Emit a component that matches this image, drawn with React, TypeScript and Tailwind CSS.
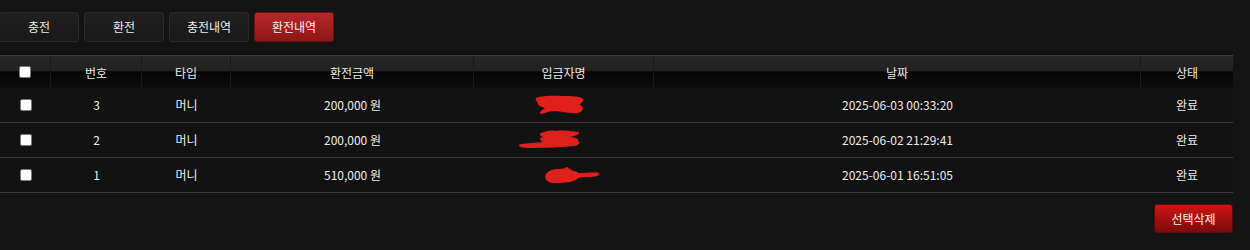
import React from "react";

const cols = [
  "w-[51px]",
  "w-[91px]",
  "w-[89px]",
  "w-[243px]",
  "w-[180px]",
  "w-[487px]",
  "w-[92px]",
];

const rows = [
  { no: 3, amount: "200,000 원", date: "2025-06-03 00:33:20", mark: 0 },
  { no: 2, amount: "200,000 원", date: "2025-06-02 21:29:41", mark: 1 },
  { no: 1, amount: "510,000 원", date: "2025-06-01 16:51:05", mark: 2 },
];

// red marker scribbles covering names
function Scribble({ kind }: { kind: number }) {
  if (kind === 0)
    return (
      <svg width="80" height="22" viewBox="0 0 80 22" className="mr-[20px]">
        <path
          d="M22 4 C30 1 42 2 50 2 C58 2 66 2 69 5 C71 7 66 9 66 11 C70 13 70 17 64 19 C56 20 46 17 40 17 C34 17 30 20 27 20 C24 19 28 16 31 14 C27 13 23 11 24 9 C22 7 21 5 22 4 Z"
          fill="#e0201c"
        />
      </svg>
    );
  if (kind === 1)
    return (
      <svg width="80" height="22" viewBox="0 0 80 22" className="mr-[18px]">
        <path
          d="M26 4 C32 2 36 1 40 2 C44 1 56 2 64 3 C65 6 58 7 56 8 C62 9 64 10 63 12 C66 13 64 16 60 17 C50 18 30 19 12 19 C4 19 2 16 6 15 C12 14 22 14 28 13 C24 11 24 9 28 8 C25 7 24 5 26 4 Z"
          fill="#e0201c"
        />
      </svg>
    );
  return (
    <svg width="80" height="20" viewBox="0 0 80 20" className="ml-[30px]">
      <path
        d="M7 9 C9 5 16 4 20 4 C24 4 26 3 28 2 C30 3 30 4 32 5 C36 6 38 7 40 8 C48 8 56 7 60 8 C61 11 56 12 48 12 C44 12 40 12 38 14 C34 18 22 18 14 18 C7 17 5 13 7 9 Z"
        fill="#e0201c"
      />
    </svg>
  );
}

function Check() {
  return (
    <span className="block w-[12px] h-[12px] bg-white border border-[#7a7a7a] rounded-[2px] mx-auto" />
  );
}

export default function App() {
  const tabs = ["충전", "환전", "충전내역", "환전내역"];
  return (
    <div
      className="w-[1250px] h-[250px] bg-[#141414] text-[#ececec] text-[12px] overflow-hidden"
      style={{ fontFamily: '"Noto Sans CJK KR", "Noto Sans", sans-serif' }}
    >
      {/* Tabs */}
      <div className="flex gap-[5px] pt-[12px] -ml-[1px]">
        {tabs.map((t, i) => (
          <div
            key={t}
            className={
              i === 3
                ? "w-[80px] h-[30px] flex items-center justify-center rounded-[3px] border border-[#6a1414] bg-gradient-to-b from-[#b8272b] to-[#8c1717] text-[#f2f2f2]"
                : "w-[80px] h-[30px] flex items-center justify-center rounded-[3px] border border-[#2a2a2a] bg-gradient-to-b from-[#202020] to-[#191919] text-[#ececec]"
            }
          >
            {t}
          </div>
        ))}
      </div>

      {/* Table */}
      <div className="w-[1233px] mt-[13px]">
        <div className="flex h-[33px] border-t border-[#3a3a3a] bg-[linear-gradient(to_bottom,#272727_0%,#222222_45%,#050505_50%,#0d0d0d_100%)]">
          {["", "번호", "타입", "환전금액", "입금자명", "날짜", "상태"].map((h, i) => (
            <div
              key={i}
              className={`${cols[i]} ${i < 6 ? "border-r border-[#1a1a1a]" : ""} flex items-center justify-center`}
            >
              {i === 0 ? <Check /> : <span className="mt-[2px]">{h}</span>}
            </div>
          ))}
        </div>
        {rows.map((r) => (
          <div key={r.no} className="flex h-[35px] border-b border-[#3d3d3d] bg-[#121212]">
            <div className={`${cols[0]} flex items-center`}>
              <Check />
            </div>
            <div className={`${cols[1]} flex items-center justify-center`}>{r.no}</div>
            <div className={`${cols[2]} flex items-center justify-center`}>머니</div>
            <div className={`${cols[3]} flex items-center justify-center`}>{r.amount}</div>
            <div className={`${cols[4]} flex items-center justify-center`}>
              <Scribble kind={r.mark} />
            </div>
            <div className={`${cols[5]} flex items-center justify-center`}>{r.date}</div>
            <div className={`${cols[6]} flex items-center justify-center`}>완료</div>
          </div>
        ))}
        <div className="flex justify-end mt-[11px]">
          <button className="w-[79px] h-[29px] rounded-[3px] border border-[#5a0a0a] bg-gradient-to-b from-[#d01414] to-[#7c0b0b] text-[#f2f2f2] text-[12px]">
            선택삭제
          </button>
        </div>
      </div>
    </div>
  );
}
